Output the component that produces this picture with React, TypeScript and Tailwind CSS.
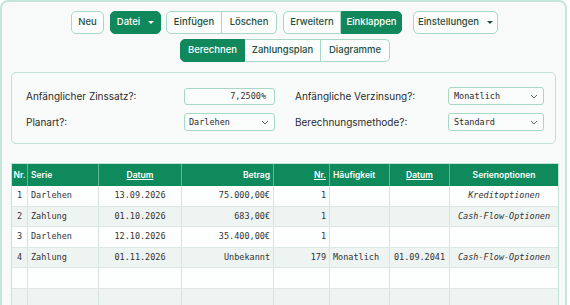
import React from "react";

const btn =
  "h-[23px] flex items-center justify-center border border-[#a8d8c5] bg-[#fbfdfc] text-[9.5px] font-medium text-[#25503f]";
const btnOn =
  "h-[23px] flex items-center justify-center border border-[#0f8a5e] bg-[#11875c] text-[9.5px] font-medium text-white";

function Caret({ light }: { light?: boolean }) {
  return (
    <svg width="6" height="3" viewBox="0 0 6 3" className="ml-[8px]">
      <path d="M0 0 L6 0 L3 3 Z" fill={light ? "#ffffff" : "#25503f"} />
    </svg>
  );
}

function Chevron() {
  return (
    <svg width="8" height="5" viewBox="0 0 8 5">
      <path d="M1 1 L4 4 L7 1" fill="none" stroke="#666" strokeWidth="1" />
    </svg>
  );
}

const mono = "font-['DejaVu_Sans_Mono',monospace]";

type Row = {
  nr: string;
  serie: string;
  datum: string;
  betrag: string;
  n: string;
  hf: string;
  d2: string;
  opt: string;
};

const rows: Row[] = [
  { nr: "1", serie: "Darlehen", datum: "13.09.2026", betrag: "75.000,00€", n: "1", hf: "", d2: "", opt: "Kreditoptionen" },
  { nr: "2", serie: "Zahlung", datum: "01.10.2026", betrag: "683,00€", n: "1", hf: "", d2: "", opt: "Cash-Flow-Optionen" },
  { nr: "3", serie: "Darlehen", datum: "12.10.2026", betrag: "35.400,00€", n: "1", hf: "", d2: "", opt: "" },
  { nr: "4", serie: "Zahlung", datum: "01.11.2026", betrag: "Unbekannt", n: "179", hf: "Monatlich", d2: "01.09.2041", opt: "Cash-Flow-Optionen" },
  { nr: "", serie: "", datum: "", betrag: "", n: "", hf: "", d2: "", opt: "" },
  { nr: "", serie: "", datum: "", betrag: "", n: "", hf: "", d2: "", opt: "" },
];

const cols = "grid grid-cols-[16px_71px_83px_92px_56px_60px_60px_1fr]";

export default function App() {
  return (
    <div className="w-[570px] h-[305px] overflow-hidden bg-white font-['Inter',sans-serif]">
      <div className="w-[567px] h-[330px] border-2 border-[#c4e7da] rounded-[8px] bg-[#f7faf9] pt-[9px] px-[9px]">
        {/* toolbar row 1 */}
        <div className="flex items-center h-[23px] ml-[60px]">
          <div className={`${btn} w-[33px] rounded-[5px]`}>Neu</div>
          <div className={`${btnOn} w-[51px] rounded-[5px] ml-[6px]`}>
            Datei
            <Caret light />
          </div>
          <div className="flex ml-[5px]">
            <div className={`${btn} w-[56px] rounded-l-[5px]`}>Einfügen</div>
            <div className={`${btn} w-[55px] rounded-r-[5px] border-l-0`}>Löschen</div>
          </div>
          <div className="flex ml-[6px]">
            <div className={`${btn} w-[58px] rounded-l-[5px]`}>Erweitern</div>
            <div className={`${btnOn} w-[61px] rounded-r-[5px]`}>Einklappen</div>
          </div>
          <div className={`${btn} w-[85px] rounded-[5px] ml-[11px]`}>
            Einstellungen
            <Caret />
          </div>
        </div>
        {/* toolbar row 2 */}
        <div className="flex items-center h-[23px] mt-[5px] ml-[169px]">
          <div className={`${btnOn} w-[65px] rounded-l-[5px]`}>Berechnen</div>
          <div className={`${btn} w-[76px] border-l-0`}>Zahlungsplan</div>
          <div className={`${btn} w-[69px] rounded-r-[5px] border-l-0`}>Diagramme</div>
        </div>
        {/* form panel */}
        <div className="mt-[10px] h-[72px] border border-[#bce2d3] rounded-[5px] bg-[#f8fbfa] flex pt-[14px] text-[10px] text-[#2b2b2b]">
          <div className="w-[273px] pl-[14px] flex flex-col gap-[8px]">
            <div className="flex items-center h-[18px]">
              <span className="w-[158px]">Anfänglicher Zinssatz?:</span>
              <div className={`w-[91px] h-[17px] border border-[#a8d8c5] rounded-[3px] bg-[#fbfdfc] flex items-center justify-end pr-[8px] text-[8.5px] ${mono} text-[#333]`}>
                7,2500%
              </div>
            </div>
            <div className="flex items-center h-[18px]">
              <span className="w-[158px]">Planart?:</span>
              <div className={`w-[91px] h-[18px] border border-[#a8d8c5] rounded-[3px] bg-[#fbfdfc] flex items-center justify-between pl-[4px] pr-[5px] text-[8.5px] ${mono}`}>
                Darlehen
                <Chevron />
              </div>
            </div>
          </div>
          <div className="pl-[10px] flex flex-col gap-[8px]">
            <div className="flex items-center h-[18px]">
              <span className="w-[153px]">Anfängliche Verzinsung?:</span>
              <div className={`w-[96px] h-[18px] border border-[#a8d8c5] rounded-[3px] bg-[#fbfdfc] flex items-center justify-between pl-[5px] pr-[5px] text-[8.5px] ${mono}`}>
                Monatlich
                <Chevron />
              </div>
            </div>
            <div className="flex items-center h-[18px]">
              <span className="w-[153px]">Berechnungsmethode?:</span>
              <div className={`w-[96px] h-[18px] border border-[#a8d8c5] rounded-[3px] bg-[#fbfdfc] flex items-center justify-between pl-[5px] pr-[5px] text-[8.5px] ${mono}`}>
                Standard
                <Chevron />
              </div>
            </div>
          </div>
        </div>
        {/* table */}
        <div className="mt-[19px] border border-[#bfe3d5] w-[548px]">
          <div className={`${cols} h-[22px] bg-[#0f8a5d] text-white text-[8.5px] font-semibold`}>
            <div className="flex items-center justify-center border-r border-[#5fb695]">Nr.</div>
            <div className="flex items-center pl-[3px] border-r border-[#5fb695]">Serie</div>
            <div className="flex items-center justify-center border-r border-[#5fb695] underline">Datum</div>
            <div className="flex items-center justify-end pr-[3px] border-r border-[#5fb695]">Betrag</div>
            <div className="flex items-center justify-end pr-[3px] border-r border-[#5fb695] underline">Nr.</div>
            <div className="flex items-center pl-[3px] border-r border-[#5fb695]">Häufigkeit</div>
            <div className="flex items-center justify-center border-r border-[#5fb695] underline">Datum</div>
            <div className="flex items-center justify-center">Serienoptionen</div>
          </div>
          {rows.map((r, i) => (
            <div
              key={i}
              className={`${cols} h-[20.5px] text-[8.5px] text-[#333] ${mono} border-b border-[#dde8e4] ${i % 2 === 0 ? "bg-[#fdfefe]" : "bg-[#eef4f2]"}`}
            >
              <div className="flex items-center justify-center border-r border-[#d6e3de]">{r.nr}</div>
              <div className="flex items-center pl-[3px] border-r border-[#d6e3de]">{r.serie}</div>
              <div className="flex items-center justify-center border-r border-[#d6e3de]">{r.datum}</div>
              <div className="flex items-center justify-end pr-[3px] border-r border-[#d6e3de]">{r.betrag}</div>
              <div className="flex items-center justify-end pr-[3px] border-r border-[#d6e3de]">{r.n}</div>
              <div className="flex items-center pl-[3px] border-r border-[#d6e3de]">{r.hf}</div>
              <div className="flex items-center justify-center border-r border-[#d6e3de]">{r.d2}</div>
              <div className="flex items-center justify-center italic">{r.opt}</div>
            </div>
          ))}
        </div>
      </div>
    </div>
  );
}
